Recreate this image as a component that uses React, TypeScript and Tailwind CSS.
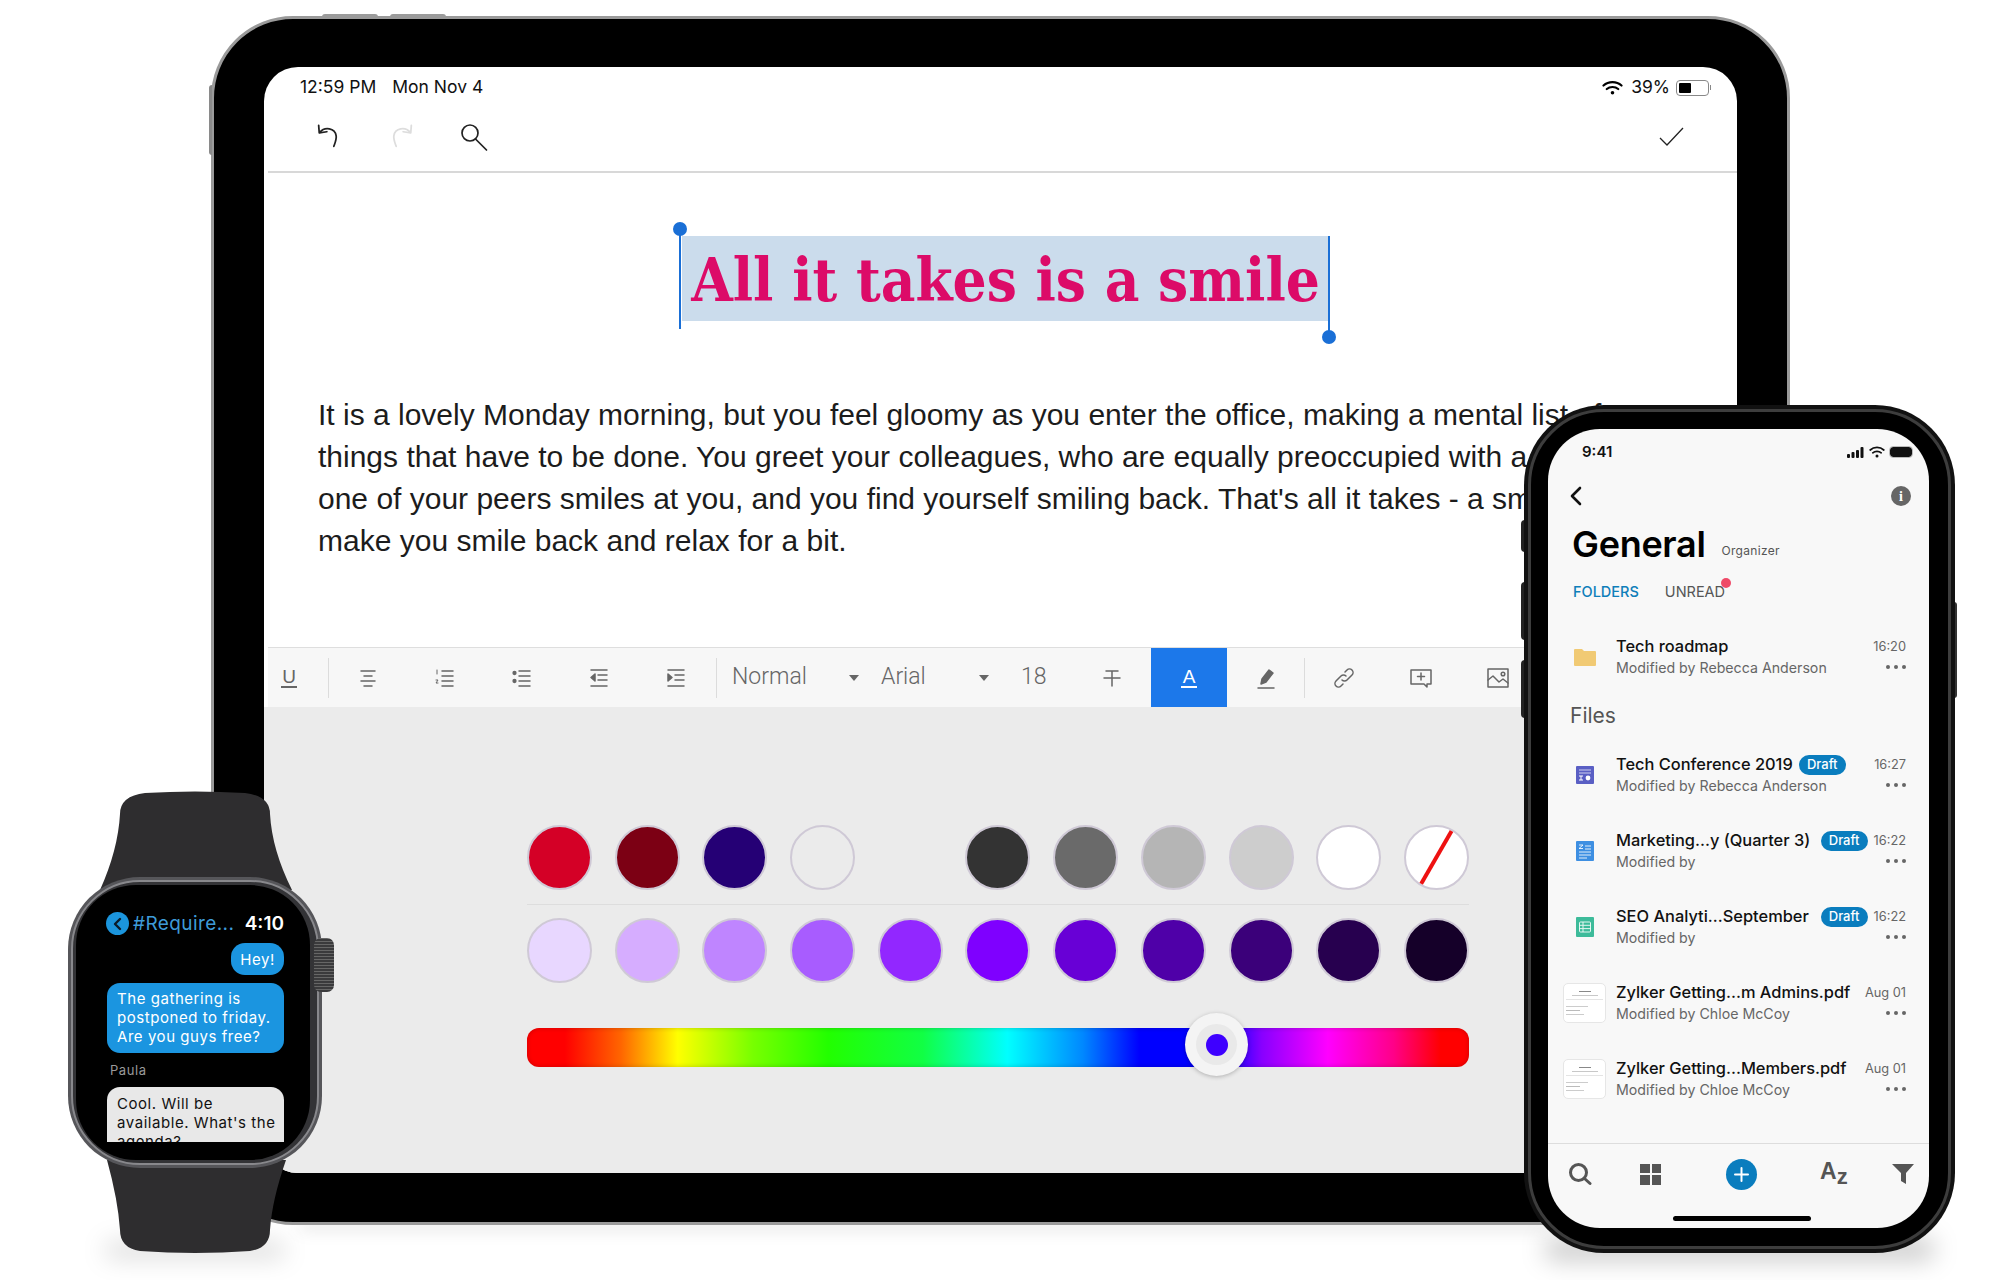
import React from "react";

const topColors = ["#d40026", "#7c0014", "#250075", "#ebebeb", "", "#333333", "#6a6a6a", "#b5b5b5", "#cdcdcd", "#ffffff"];
const shadeColors = ["#e8d7ff", "#d6adff", "#bf85ff", "#a85cff", "#9227ff", "#7f00ff", "#6800d6", "#4f00a8", "#3b007a", "#27004f", "#150029"];

function Swatch({ color }: { color: string }) {
  if (!color) return <div className="h-[65px] w-[65px]" />;
  return (
    <div
      className="h-[65px] w-[65px] rounded-full border-2 border-[#cfc9d6]"
      style={{ backgroundColor: color }}
    />
  );
}

function Ico({ children, w = 24, h = 24, color = "#666" }: { children: React.ReactNode; w?: number; h?: number; color?: string }) {
  return (
    <svg width={w} height={h} viewBox="0 0 24 24" fill="none" stroke={color} strokeWidth="1.5" strokeLinecap="round" strokeLinejoin="round">
      {children}
    </svg>
  );
}

function ToolCell({ children, className = "w-[77px]" }: { children: React.ReactNode; className?: string }) {
  return <div className={`flex h-full shrink-0 items-center justify-center ${className}`}>{children}</div>;
}

function Divider() {
  return <div className="h-[40px] w-px shrink-0 bg-[#dcdcdc]" />;
}

function Caret() {
  return <div className="h-0 w-0 border-x-[5px] border-t-[6px] border-x-transparent border-t-[#666]" />;
}

function Toolbar() {
  return (
    <div className="ml-1 flex h-[60px] shrink-0 items-center border-t border-[#dedede] bg-[#f7f7f7] font-[Roboto,sans-serif] text-[23px] font-light text-[#555]">
      <ToolCell className="w-[42px]">
        <span className="border-b-2 border-[#666] px-[1px] font-['Liberation_Sans',sans-serif] text-[19px] leading-[19px] font-normal text-[#666]">U</span>
      </ToolCell>
      <div className="w-[18px] shrink-0" />
      <Divider />
      <ToolCell>
        <Ico><path d="M5 5h14M8 10h8M5 15h14M8 20h8" /></Ico>
      </ToolCell>
      <ToolCell>
        <Ico><path d="M9 5h11M9 10h11M9 15h11M9 20h11" /><path d="M4 4v4M3 14h2l-2 3h2" strokeWidth="1" /></Ico>
      </ToolCell>
      <ToolCell>
        <Ico><path d="M9 5h11M9 10h11M9 15h11M9 20h11" /><circle cx="4.5" cy="7" r="1.4" fill="#666" /><circle cx="4.5" cy="15" r="1.4" fill="#666" /></Ico>
      </ToolCell>
      <ToolCell>
        <Ico><path d="M4 4h16M11 9h9M11 14h9M4 20h16" /><path d="M8 8v7l-4-3.5z" fill="#666" /></Ico>
      </ToolCell>
      <ToolCell>
        <Ico><path d="M4 4h16M11 9h9M11 14h9M4 20h16" /><path d="M4 8v7l4-3.5z" fill="#666" /></Ico>
      </ToolCell>
      <div className="w-[2px] shrink-0" />
      <Divider />
      <div className="flex w-[120px] shrink-0 items-center pl-[15px] text-[#666]">Normal</div>
      <div className="flex w-[44px] shrink-0 items-center pl-[12px]"><Caret /></div>
      <div className="flex w-[98px] shrink-0 items-center text-[#666]">Arial</div>
      <div className="flex w-[30px] shrink-0 items-center"><Caret /></div>
      <div className="w-[63px] shrink-0 pl-[12px] text-[#666]">18</div>
      <ToolCell className="w-[79px]">
        <Ico><path d="M6 5h12M4 12h16M12 5v15" /></Ico>
      </ToolCell>
      <ToolCell className="h-[60px] w-[76px] bg-[#1c78ea]">
        <span className="border-b-2 border-white px-[2px] font-['Liberation_Sans',sans-serif] text-[19px] leading-[19px] text-white">A</span>
      </ToolCell>
      <ToolCell>
        <Ico><path d="M4 22h16" /><path d="M7 18l1-5 7-9 4 3-7 9z" fill="#666" /></Ico>
      </ToolCell>
      <Divider />
      <ToolCell>
        <Ico><path d="M10 14a3.5 3.5 0 0 0 5 0l5-5a3.5 3.5 0 0 0-5-5l-2 2" /><path d="M14 10a3.5 3.5 0 0 0-5 0l-5 5a3.5 3.5 0 0 0 5 5l2-2" /></Ico>
      </ToolCell>
      <ToolCell>
        <Ico><path d="M2 4h20v14h-4v3l-3-3H2z" /><path d="M12 7v7M8.5 10.5h7" /></Ico>
      </ToolCell>
      <ToolCell>
        <Ico><rect x="2" y="3" width="20" height="18" /><path d="M2 14l5-4 6 6 4-3 5 4" /><circle cx="17" cy="8" r="1.8" /></Ico>
      </ToolCell>
    </div>
  );
}

function ColorPanel() {
  return (
    <div className="flex-1 bg-[#ebebeb] pt-[118px]">
      <div className="ml-[263px] w-[942px]">
        <div className="flex justify-between">
          {topColors.map((c, i) => (
            <Swatch key={i} color={c} />
          ))}
          <div className="relative h-[65px] w-[65px] overflow-hidden rounded-full border-2 border-[#cfc9d6] bg-white">
            <div className="absolute top-[-1px] left-[28px] h-[64px] w-[4px] rotate-[30deg] bg-[#ee1111]" />
          </div>
        </div>
        <div className="mt-[14px] h-px bg-[#dddddd]" />
        <div className="mt-[13px] flex justify-between">
          {shadeColors.map((c) => (
            <Swatch key={c} color={c} />
          ))}
        </div>
        <div className="relative mt-[45px] h-[39px] rounded-[12px] bg-[linear-gradient(to_right,#f00_4%,#f60_10%,#ff0_16%,#7f0_24%,#2f0_32%,#1f4_42%,#0ff_51%,#08f_59%,#00f_65%,#00f_74%,#80f_78%,#f0f_85%,#f08_92%,#f00_97%)] shadow-[inset_0_0_5px_rgba(0,0,0,0.2)]">
          <div className="absolute top-[-15px] left-[658px] flex h-[63px] w-[63px] items-center justify-center rounded-full bg-[#f4f4f4] shadow-[0_1px_4px_rgba(0,0,0,0.25)]">
            <div className="flex h-[41px] w-[41px] items-center justify-center rounded-full bg-[#e9e9e9]">
              <div className="h-[22px] w-[22px] rounded-full bg-[#3e00ff]" />
            </div>
          </div>
        </div>
      </div>
    </div>
  );
}

function Tablet() {
  return (
    <div className="absolute top-[16px] left-[211px] h-[1209px] w-[1579px]">
      <div className="absolute top-[-2px] left-[111px] h-[3px] w-[56px] rounded-t-sm bg-[#9b9b9b]" />
      <div className="absolute top-[-2px] left-[179px] h-[3px] w-[56px] rounded-t-sm bg-[#9b9b9b]" />
      <div className="absolute top-[69px] left-[-2px] h-[70px] w-[3px] rounded-l-sm bg-[#8a8a8a]" />
      <div className="h-full w-full rounded-[82px] border-[3px] border-[#9a9a9a] bg-black pt-[48px] pl-[50px]">
        <div className="flex h-[1106px] w-[1473px] flex-col overflow-hidden rounded-[34px] bg-white">
          <div className="flex h-[40px] shrink-0 items-center pt-[1px] pr-[26px] pl-[36px] font-[Inter,sans-serif] text-[17.5px] text-[#111]">
            <span>12:59 PM</span>
            <span className="ml-[16px]">Mon Nov 4</span>
            <svg className="ml-auto" width="21" height="16" viewBox="0 0 21 16" fill="none" stroke="#000" strokeWidth="2.2" strokeLinecap="round">
              <path d="M1.5 5.5c5-4.5 13-4.5 18 0M4.8 9c3-2.7 8.4-2.7 11.4 0" />
              <circle cx="10.5" cy="12.8" r="1.8" fill="#000" stroke="none" />
            </svg>
            <span className="ml-[8px]">39%</span>
            <div className="ml-[6px] flex h-[16px] w-[33px] items-center rounded-[4px] border border-[#888] p-[2px]">
              <div className="h-full w-[12px] rounded-[1px] bg-black" />
            </div>
            <div className="ml-[1px] h-[5px] w-[1px] bg-[#888]" />
          </div>
          <div className="ml-1 flex h-[66px] shrink-0 items-center border-b-2 border-[#d8d8d8] pr-[52px] pb-[5px] pl-[46px]">
            <svg width="28" height="30" viewBox="0 0 24 24" fill="none" stroke="#222" strokeWidth="1.5" strokeLinecap="round" strokeLinejoin="round">
              <path d="M5 8c4-5 13-4 14 3 .4 3-1 6-2 9" />
              <path d="M4 2l.5 6.5L11 7.5" />
            </svg>
            <svg className="ml-[46px]" width="28" height="30" viewBox="0 0 24 24" fill="none" stroke="#ddd" strokeWidth="1.5" strokeLinecap="round" strokeLinejoin="round">
              <path d="M19 8c-4-5-13-4-14 3-.4 3 1 6 2 9" />
              <path d="M20 2l-.5 6.5L13 7.5" />
            </svg>
            <svg className="ml-[43px]" width="30" height="30" viewBox="0 0 30 30" fill="none" stroke="#222" strokeWidth="1.7" strokeLinecap="round">
              <circle cx="11" cy="11" r="8" />
              <path d="M16.5 17l11 11" />
            </svg>
            <svg className="ml-auto" width="26" height="22" viewBox="0 0 26 22" fill="none" stroke="#222" strokeWidth="1.3">
              <path d="M1 12l7 7L24 2" />
            </svg>
          </div>

          <div className="relative h-[474px] shrink-0 overflow-hidden">
            <div className="relative mt-[63px] ml-[418px] h-[85px] w-[647px] bg-[#cbdcec] text-center font-['DejaVu_Serif_Condensed','Liberation_Serif',serif] text-[59.6px] leading-[89px] font-bold whitespace-nowrap text-[#dc0b68]">
              All it takes is a smile
              <div className="absolute top-[-11px] left-[-3px] h-[104px] w-[2px] bg-[#1a6fd6]" />
              <div className="absolute top-[-14px] left-[-9px] h-[14px] w-[14px] rounded-full bg-[#1a6fd6]" />
              <div className="absolute top-0 right-[-1px] h-[100px] w-[2px] bg-[#1a6fd6]" />
              <div className="absolute top-[94px] right-[-7px] h-[14px] w-[14px] rounded-full bg-[#1a6fd6]" />
            </div>
            <div className="mt-[73px] pl-[54px] font-['Liberation_Sans',sans-serif] text-[30px] leading-[42px] whitespace-nowrap text-[#1c1c1c]">
              <p>It is a lovely Monday morning, but you feel gloomy as you enter the office, making a mental list of</p>
              <p>things that have to be done. You greet your colleagues, who are equally preoccupied with a</p>
              <p>one of your peers smiles at you, and you find yourself smiling back. That's all it takes - a smile to</p>
              <p>make you smile back and relax for a bit.</p>
            </div>
          </div>

          <Toolbar />
          <ColorPanel />
        </div>
      </div>
    </div>
  );
}

function Watch() {
  return (
    <div className="absolute top-[790px] left-[60px] h-[470px] w-[280px]">
      <div className="absolute top-[452px] left-[45px] h-[16px] w-[180px] rounded-full bg-black/15 blur-md" />
      <svg className="absolute top-0 left-0" width="280" height="470" viewBox="0 0 280 470">
        <path d="M60 24 Q60 6 85 3 Q135 0 185 3 Q210 6 210 24 Q212 60 232 100 L40 100 Q58 60 60 24Z" fill="#2e2d2f" />
        <path d="M47 370 L226 370 Q212 410 210 440 Q210 458 190 461 Q135 465 80 461 Q60 458 60 440 Q58 410 47 370Z" fill="#2e2d2f" />
      </svg>
      <div className="absolute top-[87px] left-[8px] h-[291px] w-[254px] rounded-[72px] bg-[#56565a] p-[3px]">
        <div className="h-full w-full rounded-[69px] border-2 border-[#88888c] bg-[#333336] p-[3px]">
          <div className="flex h-[275px] w-[234px] flex-col overflow-hidden rounded-[60px] bg-black pt-[27px] pr-[26px] pl-[31px] font-[Inter,sans-serif] text-[15px] leading-[19px] tracking-[0.55px] text-white">
            <div className="-ml-[1px] flex h-[23px] shrink-0 items-center">
              <div className="flex h-[23px] w-[23px] shrink-0 items-center justify-center rounded-full bg-[#1b95dd]">
                <svg width="12" height="14" viewBox="0 0 12 14" fill="none" stroke="#0b1c2a" strokeWidth="2.4" strokeLinecap="round" strokeLinejoin="round">
                  <path d="M8 2L3 7l5 5" />
                </svg>
              </div>
              <span className="ml-[4px] text-[19px] tracking-[0.4px] whitespace-nowrap text-[#3e9bd8]">#Require...</span>
              <span className="ml-auto text-[19px] font-semibold tracking-normal">4:10</span>
            </div>
            <div className="mt-[8px] flex h-[32px] w-[53px] shrink-0 items-center justify-center self-end rounded-[14px] bg-[#1b95e0]">Hey!</div>
            <div className="mt-[8px] h-[70px] shrink-0 rounded-[13px] bg-[#1b95e0] px-[10px] pt-[6px] whitespace-nowrap">
              The gathering is
              <br />
              postponed to friday.
              <br />
              Are you guys free?
            </div>
            <div className="mt-[9px] h-[16px] shrink-0 pl-[3px] text-[13px] leading-[16px] text-[#9a9a9a]">Paula</div>
            <div className="mt-[9px] h-[55px] shrink-0 overflow-hidden rounded-t-[13px] bg-[#e8e8e8] px-[10px] pt-[7px] whitespace-nowrap text-[#111]">
              Cool. Will be
              <br />
              available. What's the
              <br />
              agenda?
            </div>
          </div>
        </div>
      </div>
      <div className="absolute top-[148px] left-[254px] h-[54px] w-[20px] rounded-[7px] bg-[repeating-linear-gradient(0deg,#3a3a3c_0px,#3a3a3c_2px,#666_2px,#666_3px)]" />
    </div>
  );
}

function FileThumb() {
  return (
    <div className="flex h-[40px] w-[43px] flex-col items-center gap-[3px] rounded-[5px] border border-[#e6e6e6] bg-white px-[2px] pt-[7px]">
      <div className="h-px w-[12px] bg-[#888]" />
      <div className="h-px w-[26px] bg-[#c8c8c8]" />
      <div className="mb-[3px] h-px w-full bg-[#e4e4e4]" />
      <div className="h-px w-[22px] self-start bg-[#ccc]" />
      <div className="h-px w-[14px] self-start bg-[#bbb]" />
      <div className="h-px w-[18px] self-start bg-[#ccc]" />
    </div>
  );
}

function FolderIcon() {
  return (
    <svg width="22" height="18" viewBox="0 0 22 18">
      <path d="M0 2a1 1 0 0 1 1-1h7l2 2h11a1 1 0 0 1 1 1v13a1 1 0 0 1-1 1H1a1 1 0 0 1-1-1z" fill="#f1ca74" />
    </svg>
  );
}

function SlideIcon() {
  return (
    <svg width="18" height="18" viewBox="0 0 18 18">
      <rect width="18" height="18" rx="1" fill="#5a5fc4" />
      <path d="M3 4h12M3 7h12" stroke="#fff" strokeWidth="1" opacity=".7" />
      <path d="M3 10h4M5 10v4M3 14h4" stroke="#fff" strokeWidth="1" />
      <circle cx="12" cy="12" r="2.4" fill="#fff" />
    </svg>
  );
}

function DocIcon() {
  return (
    <svg width="18" height="20" viewBox="0 0 18 20">
      <rect width="18" height="20" rx="1" fill="#3e8fe2" />
      <path d="M3 4h4l-4 3.5h4M9 5h6M9 8h6M3 11h12M3 14h12M3 17h8" stroke="#fff" strokeWidth="1" fill="none" opacity=".85" />
    </svg>
  );
}

function SheetIcon() {
  return (
    <svg width="18" height="20" viewBox="0 0 18 20">
      <rect width="18" height="20" rx="1" fill="#3dbb9a" />
      <rect x="3.5" y="5" width="11" height="10" rx="1" fill="none" stroke="#fff" strokeWidth="1" opacity=".85" />
      <path d="M3.5 8.3h11M3.5 11.6h11M7 5v10" stroke="#fff" strokeWidth="1" opacity=".85" />
    </svg>
  );
}

function Dots() {
  return (
    <div className="mb-[2px] ml-auto flex gap-[4px]">
      <div className="h-[4px] w-[4px] rounded-full bg-[#666]" />
      <div className="h-[4px] w-[4px] rounded-full bg-[#666]" />
      <div className="h-[4px] w-[4px] rounded-full bg-[#666]" />
    </div>
  );
}

function DraftBadge({ className }: { className: string }) {
  return (
    <span className={`flex h-[20px] w-[47px] shrink-0 items-center justify-center rounded-full bg-[#0a7dbe] text-[13px] font-medium text-white ${className}`}>
      Draft
    </span>
  );
}

interface PhoneRow {
  icon: React.ReactNode;
  title: string;
  sub: string;
  time: string;
  draft?: string;
}

const fileRows: PhoneRow[] = [
  { icon: <SlideIcon />, title: "Tech Conference 2019", sub: "Modified by Rebecca Anderson", time: "16:27", draft: "ml-[6px] mr-auto" },
  { icon: <DocIcon />, title: "Marketing...y (Quarter 3)", sub: "Modified by", time: "16:22", draft: "ml-auto mr-[6px]" },
  { icon: <SheetIcon />, title: "SEO Analyti...September", sub: "Modified by", time: "16:22", draft: "ml-auto mr-[6px]" },
  { icon: <FileThumb />, title: "Zylker Getting...m Admins.pdf", sub: "Modified by Chloe McCoy", time: "Aug 01" },
  { icon: <FileThumb />, title: "Zylker Getting...Members.pdf", sub: "Modified by Chloe McCoy", time: "Aug 01" },
];

function Row({ icon, title, sub, time, draft }: PhoneRow) {
  return (
    <div className="flex h-[76px] shrink-0 items-center pr-[23px] pl-[15px]">
      <div className="flex w-[43px] shrink-0 justify-center">{icon}</div>
      <div className="ml-[10px] min-w-0 flex-1">
        <div className="flex h-[21px] items-center">
          <span className="text-[16.4px] font-medium whitespace-nowrap text-[#111]">{title}</span>
          {draft && <DraftBadge className={draft} />}
          <span className={`text-[12.8px] text-[#666] ${draft ? "" : "ml-auto"}`}>{time}</span>
        </div>
        <div className="flex h-[21px] items-center">
          <span className="text-[14.2px] text-[#666]">{sub}</span>
          <Dots />
        </div>
      </div>
    </div>
  );
}

function Phone() {
  return (
    <div className="absolute top-[405px] left-[1524px] h-[848px] w-[431px]">
      <div className="absolute top-[832px] left-[20px] h-[24px] w-[391px] rounded-full bg-black/20 blur-md" />
      <div className="absolute top-[115px] left-[-3px] h-[32px] w-[4px] rounded-l-sm bg-[#222]" />
      <div className="absolute top-[177px] left-[-3px] h-[58px] w-[4px] rounded-l-sm bg-[#222]" />
      <div className="absolute top-[255px] left-[-3px] h-[58px] w-[4px] rounded-l-sm bg-[#222]" />
      <div className="absolute top-[197px] right-[-2px] h-[96px] w-[3px] rounded-r-sm bg-[#333]" />
      <div className="relative h-full w-full rounded-[80px] bg-[#111] p-[4px]">
        <div className="h-full w-full rounded-[76px] border-[3px] border-[#3d3d3d] bg-black p-[17px]">
          <div className="flex h-[799px] w-[381px] flex-col overflow-hidden rounded-[52px] bg-[#f8f8f8] font-[Inter,sans-serif] text-[#111]">
            <div className="flex h-[46px] shrink-0 items-center pr-[17px] pl-[34px]">
              <span className="text-[15px] font-semibold">9:41</span>
              <svg className="ml-auto" width="17" height="11" viewBox="0 0 17 11" fill="#111">
                <rect x="0" y="7" width="3" height="4" rx="1" />
                <rect x="4.5" y="5" width="3" height="6" rx="1" />
                <rect x="9" y="3" width="3" height="8" rx="1" />
                <rect x="13.5" y="0" width="3" height="11" rx="1" />
              </svg>
              <svg className="ml-[5px]" width="16" height="12" viewBox="0 0 16 12" fill="none" stroke="#111" strokeWidth="1.7" strokeLinecap="round">
                <path d="M1.2 4c3.8-3.4 9.8-3.4 13.6 0M3.8 6.8c2.3-2 6.1-2 8.4 0" />
                <circle cx="8" cy="10" r="1.5" fill="#111" stroke="none" />
              </svg>
              <div className="ml-[5px] h-[10px] w-[22px] rounded-[3px] bg-[#111] outline outline-[#bbb]" />
            </div>
            <div className="flex h-[42px] shrink-0 items-center justify-between pr-[18px] pl-[21px]">
              <svg width="14" height="22" viewBox="0 0 14 22" fill="none" stroke="#111" strokeWidth="2.6" strokeLinecap="round" strokeLinejoin="round">
                <path d="M11 3L3 11l8 8" />
              </svg>
              <div className="flex h-[20px] w-[20px] items-center justify-center rounded-full bg-[#666] font-['Liberation_Serif',serif] text-[14px] font-bold text-white">i</div>
            </div>
            <div className="flex h-[53px] shrink-0 items-center pl-[24px]">
              <span className="text-[36px] font-semibold tracking-[-0.3px] text-black">General</span>
              <span className="mt-[15px] ml-[16px] text-[12px] tracking-[0.3px] text-[#555]">Organizer</span>
            </div>
            <div className="relative flex h-[44px] shrink-0 items-center pl-[25px] text-[14.5px]">
              <span className="font-medium text-[#0f7fba]">FOLDERS</span>
              <span className="relative ml-[26px] text-[#555]">
                UNREAD
                <div className="absolute top-[-3px] right-[-6px] h-[10px] w-[10px] rounded-full bg-[#ef4a68]" />
              </span>
            </div>
            <div className="pt-[5px]">
              <Row icon={<FolderIcon />} title="Tech roadmap" sub="Modified by Rebecca Anderson" time="16:20" />
            </div>
            <div className="flex h-[42px] shrink-0 items-center pl-[22px] text-[21px] text-[#555]">Files</div>
            {fileRows.map((r) => (
              <Row key={r.title} {...r} />
            ))}
            <div className="mt-[26px] flex flex-1 flex-col border-t border-[#dddddd]">
              <div className="relative flex h-[60px] shrink-0 items-center pr-[15px] pl-[20px]">
                <svg width="24" height="24" viewBox="0 0 24 24" fill="none" stroke="#555" strokeWidth="3" strokeLinecap="round">
                  <circle cx="10.5" cy="10.5" r="8" />
                  <path d="M16.5 16.5l5.5 5" />
                </svg>
                <div className="ml-[48px] grid h-[21px] w-[21px] grid-cols-2 gap-[2px]">
                  <div className="bg-[#555]" />
                  <div className="bg-[#555]" />
                  <div className="bg-[#555]" />
                  <div className="bg-[#555]" />
                </div>
                <div className="ml-[65px] flex h-[31px] w-[31px] items-center justify-center rounded-full bg-[#0a7dbe]">
                  <svg width="15" height="15" viewBox="0 0 15 15" stroke="#fff" strokeWidth="2" strokeLinecap="round">
                    <path d="M7.5 1v13M1 7.5h13" />
                  </svg>
                </div>
                <div className="ml-[63px] flex font-['Liberation_Sans',sans-serif] font-bold text-[#555]">
                  <span className="text-[23px] leading-[20px]">A</span>
                  <span className="mt-[6px] text-[22px] leading-[20px]">z</span>
                </div>
                <svg className="ml-auto" width="22" height="20" viewBox="0 0 22 20" fill="#555">
                  <path d="M0 0h22l-8 9v11l-5-3V9z" />
                </svg>
              </div>
              <div className="mt-[12px] ml-[125px] h-[5px] w-[138px] rounded-full bg-black" />
            </div>
          </div>
        </div>
      </div>
    </div>
  );
}

export default function App() {
  return (
    <div className="relative h-[1280px] w-[2000px] overflow-hidden bg-white">
      <div className="absolute top-[1220px] left-[300px] h-[10px] w-[1250px] bg-black/10 blur-sm" />
      <Tablet />
      <Watch />
      <Phone />
    </div>
  );
}
